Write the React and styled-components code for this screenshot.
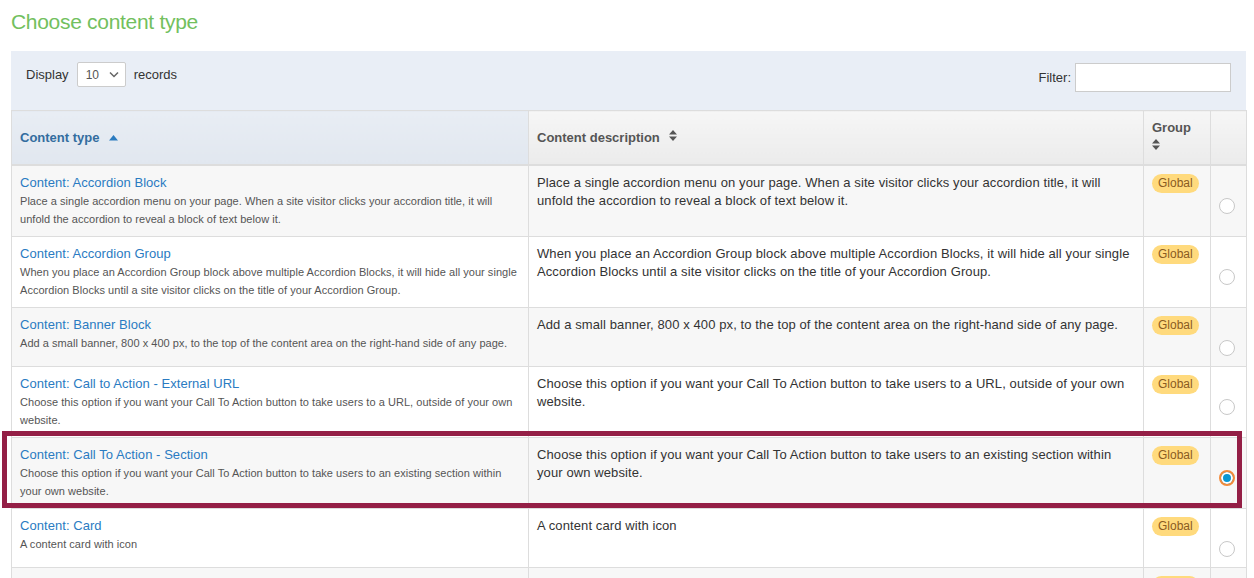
import React from 'react';
import styled, { createGlobalStyle } from 'styled-components';

const GlobalStyle = createGlobalStyle`
    html, body {
        margin: 0;
        padding: 0;
        background: #fff;
        font-family: "Liberation Sans", Arial, Helvetica, sans-serif;
    }
`;

const rows = [
    {
        title: 'Content: Accordion Block',
        summary: 'Place a single accordion menu on your page. When a site visitor clicks your accordion title, it will unfold the accordion to reveal a block of text below it.',
        description: 'Place a single accordion menu on your page. When a site visitor clicks your accordion title, it will unfold the accordion to reveal a block of text below it.',
    },
    {
        title: 'Content: Accordion Group',
        summary: 'When you place an Accordion Group block above multiple Accordion Blocks, it will hide all your single Accordion Blocks until a site visitor clicks on the title of your Accordion Group.',
        description: 'When you place an Accordion Group block above multiple Accordion Blocks, it will hide all your single Accordion Blocks until a site visitor clicks on the title of your Accordion Group.',
    },
    {
        title: 'Content: Banner Block',
        summary: 'Add a small banner, 800 x 400 px, to the top of the content area on the right-hand side of any page.',
        description: 'Add a small banner, 800 x 400 px, to the top of the content area on the right-hand side of any page.',
    },
    {
        title: 'Content: Call to Action - External URL',
        summary: 'Choose this option if you want your Call To Action button to take users to a URL, outside of your own website.',
        description: 'Choose this option if you want your Call To Action button to take users to a URL, outside of your own website.',
    },
    {
        title: 'Content: Call To Action - Section',
        summary: 'Choose this option if you want your Call To Action button to take users to an existing section within your own website.',
        description: 'Choose this option if you want your Call To Action button to take users to an existing section within your own website.',
        selected: true,
    },
    {
        title: 'Content: Card',
        summary: 'A content card with icon',
        description: 'A content card with icon',
    },
    {
        title: 'Content: Card Group',
        summary: 'A group of content cards',
        description: 'A group of content cards',
    },
];

function SortBoth() {
    return (
        <svg width="8" height="11" viewBox="0 0 8 11">
            <path d="M4 0 L8 4.5 H0 Z M4 11 L0 6.5 H8 Z" fill="#555" />
        </svg>
    );
}

function SortAsc() {
    return (
        <svg width="9" height="6" viewBox="0 0 9 6">
            <path d="M4.5 0 L9 5.5 H0 Z" fill="#2a7bbf" />
        </svg>
    );
}

function Chevron() {
    return (
        <svg width="10" height="7" viewBox="0 0 10 7">
            <path d="M1 1.5 L5 5.5 L9 1.5" fill="none" stroke="#666" strokeWidth="1.5" />
        </svg>
    );
}

function App() {
    return (
        <Page>
            <GlobalStyle />
            <Heading>Choose content type</Heading>
            <Toolbar>
                <Length>
                    Display
                    <FakeSelect>
                        <span>10</span>
                        <Chevron />
                    </FakeSelect>
                    records
                </Length>
                <FilterLabel>
                    Filter:
                    <FilterInput type="text" />
                </FilterLabel>
            </Toolbar>
            <Table>
                <colgroup>
                    <col style={{ width: 517 }} />
                    <col style={{ width: 615 }} />
                    <col style={{ width: 67 }} />
                    <col style={{ width: 36 }} />
                </colgroup>
                <thead>
                    <tr>
                        <HeadCell sorted>
                            Content type <SortMark><SortAsc /></SortMark>
                        </HeadCell>
                        <HeadCell>
                            Content description <SortMark><SortBoth /></SortMark>
                        </HeadCell>
                        <HeadCell>
                            Group<br /><SortBoth />
                        </HeadCell>
                        <HeadCell />
                    </tr>
                </thead>
                <tbody>
                    {rows.map((row, i) => (
                        <Row key={row.title} striped={i % 2 === 0}>
                            <TypeCell>
                                {row.selected && <Highlight />}
                                <TypeLink>{row.title}</TypeLink>
                                <Summary>{row.summary}</Summary>
                            </TypeCell>
                            <DescCell>{row.description}</DescCell>
                            <GroupCell>
                                <Badge>Global</Badge>
                            </GroupCell>
                            <RadioCell>
                                <Radio checked={row.selected} />
                            </RadioCell>
                        </Row>
                    ))}
                </tbody>
            </Table>
        </Page>
    );
}

const Page = styled.div`
    padding: 9px 8px 0 11px;
    height: 578px;
    overflow: hidden;
    box-sizing: border-box;
`;

const Heading = styled.h1`
    margin: 0 0 16px;
    font-size: 21px;
    line-height: 26px;
    font-weight: 300;
    color: #72c05e;
    letter-spacing: -0.3px;
`;

const Toolbar = styled.div`
    display: flex;
    justify-content: space-between;
    align-items: flex-start;
    background: #e9eef6;
    height: 59px;
    box-sizing: border-box;
    padding: 11px 15px 0 15px;
    font-size: 13px;
    color: #333;
`;

const Length = styled.label`
    display: flex;
    align-items: center;
    gap: 8px;
`;

const FakeSelect = styled.div`
    display: flex;
    align-items: center;
    justify-content: space-between;
    width: 49px;
    height: 25px;
    box-sizing: border-box;
    padding: 0 6px 0 8px;
    background: #fff;
    border: 1px solid #ccc;
    border-radius: 2px;
    color: #555;
    font-size: 12px;
`;

const FilterLabel = styled.label`
    display: flex;
    align-items: center;
    gap: 4px;
    margin-top: 1px;
`;

const FilterInput = styled.input`
    width: 156px;
    height: 29px;
    box-sizing: border-box;
    border: 1px solid #ccc;
    background: #fff;
    outline: none;
`;

const Table = styled.table`
    width: 1235px;
    table-layout: fixed;
    border-collapse: collapse;
    font-size: 13px;
    color: #333;
`;

const HeadCell = styled.th`
    text-align: left;
    vertical-align: middle;
    padding: 8px 8px 9px;
    line-height: 18px;
    font-weight: bold;
    color: ${p => (p.sorted ? '#336d9f' : '#555')};
    background: ${p => (p.sorted
        ? 'linear-gradient(#e8edf4, #e1e7ef)'
        : 'linear-gradient(#f6f6f6, #ebebeb)')};
    border: 1px solid #ddd;
    border-bottom: 2px solid #ddd;
    height: 35px;
`;

const SortMark = styled.span`
    display: inline-block;
    margin-left: 6px;
    vertical-align: 1px;
`;

const Row = styled.tr`
    background: ${p => (p.striped ? '#f7f7f7' : '#fff')};
`;

const Cell = styled.td`
    vertical-align: top;
    border: 1px solid #ddd;
    line-height: 18px;
`;

const TypeCell = styled(Cell)`
    position: relative;
    padding: 8px 8px 8px;
`;

const TypeLink = styled.a`
    display: block;
    color: #2a7bc2;
    font-size: 13px;
    letter-spacing: 0.05px;
    cursor: pointer;
`;

const Summary = styled.div`
    font-size: 11px;
    color: #555;
    letter-spacing: 0.04px;
`;

const DescCell = styled(Cell)`
    padding: 8px 8px 7px;
    color: #333;
    letter-spacing: 0.1px;
`;

const GroupCell = styled(Cell)`
    padding: 8px 8px;
`;

const Badge = styled.span`
    display: inline-block;
    background: #ffda7d;
    color: #8a5b22;
    font-size: 12px;
    line-height: 19px;
    padding: 0 6px;
    border-radius: 10px;
`;

const RadioCell = styled(Cell)`
    padding: 32px 4px 10px 0;
`;

const Radio = styled.span`
    display: block;
    margin: 0 auto;
    width: 16px;
    height: 16px;
    box-sizing: border-box;
    border-radius: 50%;
    background: ${p => (p.checked ? '#0a97d3' : '#fff')};
    border: ${p => (p.checked ? '2px solid #f28a3a' : '1px solid #c8c8c8')};
    box-shadow: ${p => (p.checked ? 'inset 0 0 0 2px #fff' : 'none')};
`;

const Highlight = styled.div`
    position: absolute;
    left: -10px;
    top: -7px;
    bottom: 0;
    width: 1240px;
    box-sizing: border-box;
    border: 5px solid #941f46;
    pointer-events: none;
    z-index: 2;
`;

export default App
